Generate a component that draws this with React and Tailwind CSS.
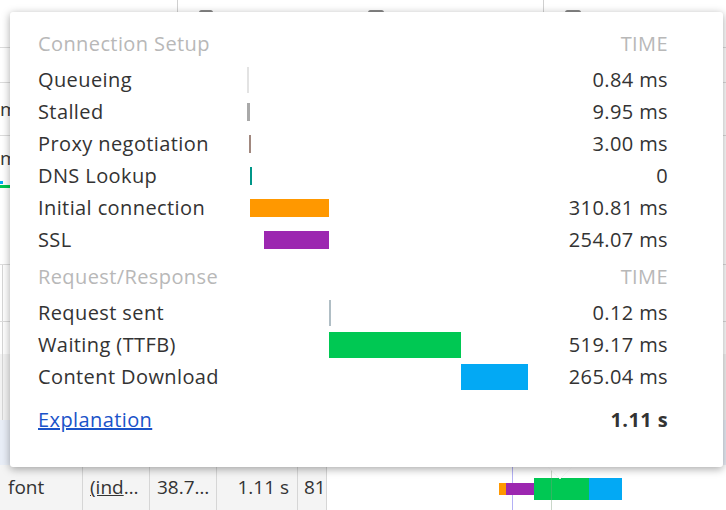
import React from "react";

const font = { fontFamily: '"Open Sans", "Noto Sans", sans-serif' };

const setupRows = [
  { label: "Queueing", time: "0.84 ms", bar: { left: 0, width: 2, h: "h-[26px]", color: "bg-[#e3e3e3]" } },
  { label: "Stalled", time: "9.95 ms", bar: { left: 0, width: 3, h: "h-[18px]", color: "bg-[#a9a9a9]" } },
  { label: "Proxy negotiation", time: "3.00 ms", bar: { left: 2, width: 2, h: "h-[18px]", color: "bg-[#a1887f]" } },
  { label: "DNS Lookup", time: "0", bar: { left: 3, width: 2, h: "h-[18px]", color: "bg-[#009688]" } },
  { label: "Initial connection", time: "310.81 ms", bar: { left: 3, width: 79, h: "h-[18px]", color: "bg-[#ff9800]" } },
  { label: "SSL", time: "254.07 ms", bar: { left: 17, width: 65, h: "h-[18px]", color: "bg-[#9c27b0]" } },
];

const reqRows = [
  { label: "Request sent", time: "0.12 ms", bar: { left: 82, width: 2, h: "h-[26px]", color: "bg-[#b0bec5]" } },
  { label: "Waiting (TTFB)", time: "519.17 ms", bar: { left: 82, width: 132, h: "h-[26px]", color: "bg-[#00c853]" } },
  { label: "Content Download", time: "265.04 ms", bar: { left: 214, width: 67, h: "h-[26px]", color: "bg-[#03a9f4]" } },
];

function Row({ label, time, bar }) {
  return (
    <div className="flex h-[32px] items-center">
      <div className="w-[209px] text-[#333333] whitespace-nowrap">{label}</div>
      <div className="relative h-full w-[282px] flex items-center">
        <div
          className={`${bar.h} ${bar.color}`}
          style={{ marginLeft: bar.left, width: bar.width }}
        />
      </div>
      <div className="flex-1 text-right text-[#333333]">{time}</div>
    </div>
  );
}

function Header({ title }) {
  return (
    <div className="flex h-[32px] items-center text-[#b8b8b8]">
      <div className="flex-1">{title}</div>
      <div>TIME</div>
    </div>
  );
}

export default function App() {
  return (
    <div className="relative w-[726px] h-[510px] overflow-hidden bg-white" style={font}>
      {/* background network table */}
      <div className="flex flex-col w-full h-full text-[19px] text-[#333]">
        <div className="relative h-[48px] border-b border-[#dcdcdc] flex">
          <div className="w-[178px] border-r border-[#d0d0d0]" />
          <div className="w-[366px] border-r border-[#d0d0d0]" />
          <div className="flex-1" />
        </div>
        <div className="h-[35px] border-b border-[#dcdcdc]" />
        <div className="h-[53px] border-b border-[#dcdcdc] flex items-center">
          <span className="leading-none">m</span>
        </div>
        <div className="h-[45px] flex items-center">
          <span className="leading-none">m</span>
        </div>
        <div className="h-[4px] flex">
          <div className="w-[3px] h-[3px] bg-[#03a9f4]" />
        </div>
        <div className="h-[3px] w-[14px] bg-[#00c853]" />
        <div className="h-[77px] border-b border-[#dcdcdc]" />
        <div className="h-[57px] border-b border-[#dcdcdc] flex">
          <div className="w-[3px] border-r border-[#d6d6d6]" />
        </div>
        <div className="h-[32px] flex">
          <div className="w-[3px] border-r border-[#d6d6d6]" />
        </div>
        <div className="h-[66px] bg-[#f3f3f3] flex">
          <div className="w-[3px] border-r border-[#d6d6d6]" />
        </div>
        <div className="h-[45px] bg-[#e9eef7]" />
        {/* bottom row */}
        <div className="flex-1 flex items-center bg-[#f4f4f4] text-[19px]">
          <div className="w-[83px] h-full flex items-center pl-[8px] border-r border-[#d6d6d6]">font</div>
          <div className="w-[67px] h-full flex items-center pl-[7px] border-r border-[#d6d6d6]">
            <span><span className="underline">(ind</span>…</span>
          </div>
          <div className="w-[67px] h-full flex items-center pl-[7px] border-r border-[#d6d6d6]">38.7…</div>
          <div className="w-[81px] h-full flex items-center justify-end pr-[8px] border-r border-[#d6d6d6]">1.11 s</div>
          <div className="w-[29px] h-full flex items-center pl-[6px] border-r border-[#d6d6d6]">81</div>
          <div className="relative flex-1 h-full bg-white">
            <div className="absolute left-[185px] top-0 bottom-0 w-[1px] bg-[#b3b0f5]" />
            <div className="absolute left-[172px] top-[18px] h-[12px] w-[7px] bg-[#ff9800]" />
            <div className="absolute left-[179px] top-[18px] h-[12px] w-[28px] bg-[#9c27b0]" />
            <div className="absolute left-[207px] top-[13px] h-[22px] w-[55px] bg-[#00c853]" />
            <div className="absolute left-[262px] top-[13px] h-[22px] w-[33px] bg-[#03a9f4]" />
            <div className="absolute left-[224px] top-0 bottom-0 w-[1px] bg-[#7a9a7a] opacity-40" />
          </div>
        </div>
      </div>

      {/* header sort marks peeking above popup */}
      <div className="absolute left-[199px] top-[10px] w-[14px] h-[5px] rounded-sm bg-[#888]" />
      <div className="absolute left-[368px] top-[10px] w-[16px] h-[5px] rounded-sm bg-[#888]" />
      <div className="absolute left-[565px] top-[10px] w-[16px] h-[5px] rounded-sm bg-[#888]" />

      {/* popup arrow */}
      <svg className="absolute left-[545px] top-[464px]" width="30" height="17" viewBox="0 0 30 17">
        <path d="M1 0 L15 15 L29 0 Z" fill="#ffffff" stroke="#d6d6d6" strokeWidth="0.6" />
        <path d="M0 0 L30 0 L15 15 Z" fill="#ffffff" />
      </svg>

      {/* popup */}
      <div className="absolute left-[10px] top-[12px] w-[713px] h-[455px] bg-white rounded-[3px] shadow-[0_2px_8px_rgba(0,0,0,0.35)] pl-[28px] pr-[55px] pt-[16px] text-[20px] tracking-[0.4px]">
        <Header title="Connection Setup" />
        <div className="h-[4px]" />
        {setupRows.map((r) => (
          <Row key={r.label} {...r} />
        ))}
        <div className="h-[5px]" />
        <Header title="Request/Response" />
        <div className="h-[4px]" />
        {reqRows.map((r) => (
          <Row key={r.label} {...r} />
        ))}
        <div className="h-[11px]" />
        <div className="flex h-[32px] items-center">
          <a className="flex-1 text-[#1a53c9] underline" href="#">Explanation</a>
          <div className="font-bold text-[#333333]">1.11 s</div>
        </div>
      </div>
    </div>
  );
}
